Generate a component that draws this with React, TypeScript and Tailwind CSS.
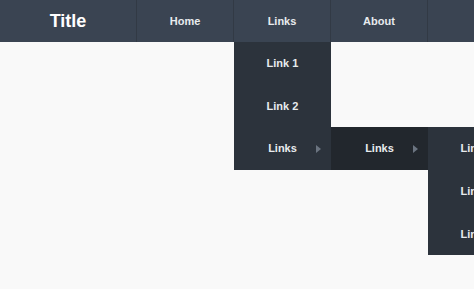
import React from 'react';

const font = { fontFamily: '"Liberation Sans", Arial, sans-serif' };

const Arrow = () => (
  <svg width="5" height="8" viewBox="0 0 5 8" className="absolute right-[10px] top-1/2 -translate-y-1/2">
    <path d="M0 0 L5 4 L0 8 Z" fill="#6b7480" />
  </svg>
);

const cell = 'relative w-[97px] shrink-0 h-full flex items-center justify-center border-r border-[#323a45] text-[11px] font-bold text-[#e8ebee]';
const item = 'relative h-[42.7px] flex items-center justify-center text-[11px] font-bold text-[#e8ebee]';

export default function App() {
  return (
    <div className="w-full h-[291px] overflow-hidden bg-[#f9f9f9] border-b-2 border-white" style={font}>
      <nav className="h-[42px] bg-[#3a4452] flex">
        <div className="w-[137px] shrink-0 h-full flex items-center justify-center border-r border-[#323a45] text-[18px] font-bold text-white">
          Title
        </div>
        <div className={cell}>Home</div>
        <div className={cell}>
          Links
          {/* dropdown */}
          <div className="absolute top-full left-0 w-[97px] bg-[#2c333c]">
            <div className={item}>Link 1</div>
            <div className={item}>Link 2</div>
            <div className={item}>
              Links
              <Arrow />
              {/* submenu */}
              <div className="absolute left-full top-0 w-[97px] bg-[#22272d]">
                <div className={item}>
                  Links
                  <Arrow />
                  <div className="absolute left-full top-0 w-[97px] bg-[#2c333c]">
                    <div className={item}>Link 1</div>
                    <div className={item}>Link 2</div>
                    <div className={item}>Link 3</div>
                  </div>
                </div>
              </div>
            </div>
          </div>
        </div>
        <div className={cell}>About</div>
        <div className={cell}></div>
      </nav>
    </div>
  );
}
